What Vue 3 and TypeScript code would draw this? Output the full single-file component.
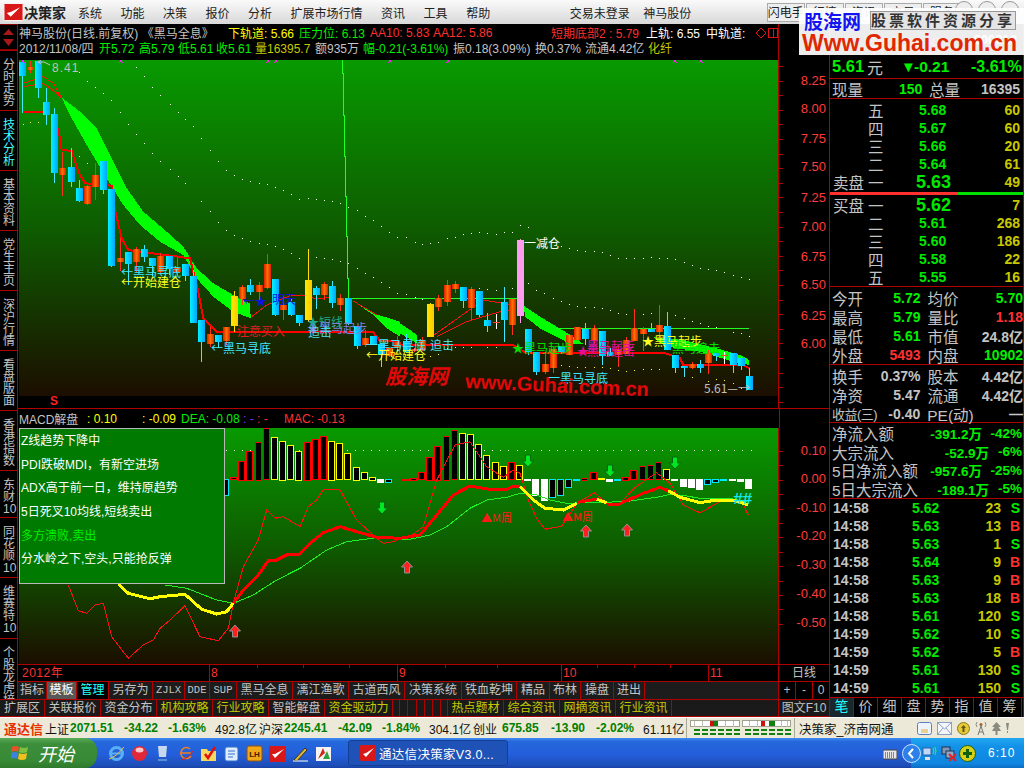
<script setup lang="ts">
// Stock terminal screenshot. Chart data was read off the reference crops, so it is
// kept in crop units (3x, with an offset) and converted to page pixels by z().
type Pt = number[]
interface Seg { t: string; c: string; w: number; b?: boolean }

const z = (ox: number, oy: number, pts: Pt[]) =>
  pts.map(([x, y]) => `${(ox + x / 3).toFixed(1)},${(oy + y / 3).toFixed(1)}`).join(' ')
const dots = (ox: number, oy: number, pts: Pt[]) =>
  pts.map(([x, y]) => ({ x: Math.round(ox + x / 3), y: Math.round(oy + y / 3) }))

const menus = ['系统', '功能', '决策', '报价', '分析', '扩展市场行情', '资讯', '工具', '帮助']
const sideTabs = [
  { t: '分时走势', h: 60 }, { t: '技术分析', h: 60, on: true }, { t: '基本资料', h: 60 }, { t: '党生主页', h: 60 },
  { t: '深沪行情', h: 60 }, { t: '看盘版面', h: 60 }, { t: '香港指数', h: 60 }, { t: '东财10', h: 47 },
  { t: '同花顺10', h: 60 }, { t: '维赛特10', h: 61 }, { t: '个股龙虎榜', h: 61 },
]

const headA: Seg[] = [
  { t: '神马股份(日线.前复权) 《黑马全息》', c: 'grey', w: 209 }, { t: '下轨道: 5.66', c: 'yellow', w: 71 },
  { t: '压力位: 6.13', c: 'green', w: 71 }, { t: 'AA10: 5.83', c: 'red', w: 63 }, { t: 'AA12: 5.86', c: 'red', w: 118 },
  { t: '短期底部2 : 5.79', c: 'red', w: 95 }, { t: '上轨: 6.55', c: 'white', w: 60 }, { t: '中轨道:', c: 'white', w: 50 },
]
const headB: Seg[] = [
  { t: '2012/11/08/四', c: 'grey', w: 80 }, { t: '开5.72', c: 'green', w: 40 }, { t: '高5.79', c: 'green', w: 39 },
  { t: '低5.61', c: 'green', w: 38 }, { t: '收5.61', c: 'green', w: 39 }, { t: '量16395.7', c: 'olive', w: 60 },
  { t: '额935万', c: 'grey', w: 48 }, { t: '幅-0.21(-3.61%)', c: 'green', w: 90 }, { t: '振0.18(3.09%)', c: 'grey', w: 82 },
  { t: '换0.37%', c: 'grey', w: 50 }, { t: '流通4.42亿', c: 'grey', w: 63 }, { t: '化纤', c: 'olive', w: 30 },
]
const macdInfo: Seg[] = [
  { t: 'MACD解盘', c: 'grey', w: 68 }, { t: ': 0.10', c: 'yellow', w: 55 }, { t: ': -0.09', c: 'yellow', w: 39 },
  { t: 'DEA: -0.08', c: 'green', w: 62 }, { t: ': -', c: 'purple', w: 14 }, { t: ': -', c: 'red', w: 27 }, { t: 'MAC: -0.13', c: 'red', w: 70 },
]

// [x, wickTop, bodyTop, bodyBottom, wickBottom, kind]
type Raw = [number, number, number, number, number, string]
const rawA: Raw[] = [
  [68, 20, 20, 62, 172, 'c'], [91, 18, 35, 45, 55, 'r'], [115, 18, 18, 100, 130, 'c'], [139, 100, 142, 180, 212, 'c'],
  [163, 158, 178, 356, 382, 'c'], [187, 290, 340, 362, 422, 'r'], [214, 278, 336, 380, 395, 'c'], [238, 375, 400, 440, 442, 'c'],
  [262, 390, 393, 448, 450, 'r'], [286, 325, 360, 395, 437, 'r'], [310, 318, 318, 404, 418, 'c'], [334, 402, 402, 632, 637, 'c'],
  [361, 550, 610, 622, 650, 'r'], [385, 590, 591, 628, 690, 'c'], [409, 575, 582, 620, 650, 'r'], [433, 570, 582, 605, 620, 'c'],
  [457, 610, 610, 635, 665, 'c'], [481, 595, 603, 652, 655, 'r'], [509, 604, 604, 644, 660, 'c'], [533, 605, 640, 652, 660, 'r'],
  [556, 628, 628, 665, 680, 'c'], [580, 645, 664, 804, 804, 'c'], [604, 795, 795, 860, 920, 'c'], [631, 815, 838, 868, 875, 'r'],
  [655, 840, 840, 860, 880, 'c'], [679, 815, 816, 858, 870, 'r'], [703, 708, 724, 815, 830, 'y'], [727, 690, 696, 732, 750, 'r'],
  [751, 672, 690, 712, 720, 'c'], [778, 680, 690, 712, 735, 'r'], [802, 598, 628, 700, 702, 'r'], [826, 672, 672, 780, 782, 'c'],
  [850, 720, 750, 764, 795, 'r'], [874, 730, 740, 780, 785, 'c'], [898, 780, 780, 803, 812, 'c'], [925, 582, 675, 795, 800, 'y'],
  [949, 692, 698, 720, 762, 'c'], [973, 682, 688, 720, 735, 'r'], [997, 678, 693, 743, 758, 'c'], [1021, 718, 730, 752, 770, 'r'],
  [1045, 730, 730, 808, 812, 'c'], [1072, 812, 812, 872, 880, 'c'], [1096, 825, 850, 872, 875, 'r'], [1120, 843, 843, 868, 870, 'c'],
  [1144, 865, 868, 902, 937, 'c'], [1168, 875, 878, 902, 905, 'r'], [1192, 842, 860, 878, 900, 'r'],
]
const rawB: Raw[] = [
  [18, 342, 362, 396, 400, 'c'], [43, 385, 388, 395, 397, 'r'], [67, 352, 360, 390, 395, 'r'], [91, 248, 252, 350, 350, 'y'],
  [115, 225, 235, 263, 272, 'r'], [142, 180, 195, 245, 258, 'r'], [166, 182, 192, 207, 218, 'r'], [190, 200, 202, 245, 264, 'c'],
  [214, 200, 207, 264, 300, 'r'], [238, 213, 213, 285, 290, 'c'], [262, 280, 300, 318, 338, 'c'], [289, 282, 306, 309, 328, 'w'],
  [313, 202, 246, 299, 368, 'c'], [337, 237, 238, 315, 345, 'r'], [361, 57, 60, 288, 308, 'p'], [385, 327, 327, 395, 405, 'c'],
  [409, 395, 395, 456, 465, 'c'], [436, 395, 432, 456, 462, 'r'], [460, 380, 388, 444, 458, 'r'], [484, 378, 378, 396, 400, 'c'],
  [508, 345, 345, 405, 405, 'r'], [532, 320, 322, 360, 362, 'r'], [556, 310, 328, 358, 375, 'c'], [583, 315, 324, 362, 372, 'r'],
  [607, 333, 333, 408, 435, 'c'], [631, 385, 396, 408, 410, 'c'], [655, 380, 387, 405, 440, 'r'], [679, 352, 360, 402, 402, 'r'],
  [703, 267, 324, 362, 362, 'r'], [730, 322, 328, 342, 395, 'r'], [754, 310, 327, 335, 337, 'c'], [778, 255, 316, 336, 365, 'r'],
  [802, 277, 318, 390, 390, 'c'], [826, 405, 405, 444, 458, 'c'], [853, 437, 437, 444, 470, 'c'], [877, 427, 431, 444, 447, 'r'],
  [901, 420, 432, 444, 458, 'c'], [925, 390, 400, 430, 462, 'r'], [949, 398, 400, 408, 422, 'c'], [973, 395, 404, 407, 430, 'w'],
  [1000, 398, 400, 437, 458, 'c'], [1024, 412, 414, 437, 450, 'c'], [1048, 445, 468, 510, 510, 'c'],
]
const wickCol: Record<string, string> = { c: '#40e8ff', r: '#ff3020', y: '#ffe000', p: '#ff99ee', w: '#ffffff' }
const bodyFill: Record<string, string> = { c: 'url(#gc)', r: 'url(#gr)', y: 'url(#gy)', p: '#ff9cf0', w: '#ff4020' }
const toCandles = (ox: number, oy: number, raw: Raw[]) =>
  raw.map(([x, wt, bt, bb, wb, k]) => {
    const cx = Math.floor(ox + x / 3)
    const top = Math.round(oy + bt / 3)
    return {
      x: cx, wt: Math.round(oy + wt / 3), wh: Math.round((wb - wt) / 3), top,
      h: Math.max(1, Math.round((bb - bt) / 3)), wick: wickCol[k], fill: bodyFill[k],
    }
  })
const candles = [...toCandles(0, 55, rawA), ...toCandles(400, 220, rawB)]

const bands = [
  z(0, 55, [[185, 128], [240, 170], [290, 220], [330, 300], [380, 400], [430, 470], [500, 530], [550, 575], [590, 640], [640, 685], [700, 720], [750, 745], [752, 790], [700, 770], [640, 725], [590, 670], [550, 600], [480, 560], [420, 510], [370, 450], [320, 370], [260, 270], [210, 180]]),
  z(0, 55, [[1060, 738], [1080, 750], [1120, 775], [1200, 800], [1200, 845], [1160, 820], [1120, 780]]),
  z(400, 220, [[0, 310], [30, 330], [50, 345], [50, 370], [0, 340]]),
  z(400, 220, [[372, 258], [420, 290], [470, 320], [520, 350], [550, 372], [510, 372], [470, 350], [420, 325], [375, 290]]),
  z(400, 220, [[760, 352], [850, 360], [950, 385], [1020, 405], [1048, 420], [1048, 435], [1000, 425], [900, 395], [830, 385], [790, 375]]),
]
const redThick = [
  z(0, 55, [[70, 172], [130, 170]]),
  z(0, 55, [[175, 220], [185, 285], [215, 288], [235, 350], [255, 385], [335, 392], [345, 465], [365, 550], [385, 585], [570, 610], [595, 710], [610, 790], [650, 830], [1080, 830], [1120, 832], [1140, 858], [1200, 860]]),
  z(400, 220, [[0, 375], [340, 375], [380, 400], [620, 398], [790, 398], [840, 415], [850, 435], [1030, 435], [1048, 445]]),
]
const redThin = [
  z(0, 55, [[70, 85], [130, 65], [160, 85], [185, 130]]),
  z(0, 55, [[70, 95], [130, 85], [165, 110], [185, 130]]),
  z(400, 220, [[95, 350], [180, 290], [250, 240], [340, 255]]),
  z(400, 220, [[110, 350], [200, 305], [300, 275], [340, 270]]),
  z(0, 55, [[755, 785], [800, 750], [870, 722], [905, 720], [950, 732], [1000, 725]]),
  z(0, 55, [[1060, 738], [1130, 780]]),
]
const stepLine = z(0, 55, [[1027, 15], [1027, 55], [1030, 55], [1030, 180], [1033, 180], [1033, 303], [1037, 303], [1037, 425], [1040, 425], [1040, 545], [1043, 545], [1043, 670], [1046, 670], [1046, 730]])

const whiteDots = [
  ...dots(0, 55, [[409, 37], [433, 63], [457, 97], [481, 120], [509, 147], [533, 170], [556, 192], [580, 213], [604, 249], [631, 286], [655, 318], [679, 345], [703, 360], [727, 372], [751, 378], [778, 385], [802, 388], [826, 395], [850, 405], [874, 418], [898, 432], [925, 428], [949, 432], [973, 435], [997, 438], [1021, 445], [1045, 455], [1072, 465], [1096, 483], [1120, 495], [1144, 513], [1168, 530], [1192, 545]]),
  ...dots(0, 55, [[238, 50], [262, 78], [286, 97], [310, 115], [334, 135], [361, 172], [385, 207], [409, 237], [433, 265], [457, 295], [481, 318], [509, 343], [533, 363], [556, 385], [604, 437], [631, 468], [655, 502], [679, 525], [703, 540], [727, 550], [751, 558], [778, 565], [802, 568], [826, 572], [850, 583], [874, 595], [898, 608], [925, 605], [949, 607], [973, 610], [997, 612], [1021, 618], [1045, 625], [1072, 640], [1096, 655], [1120, 667], [1144, 682], [1168, 697], [1192, 715]]),
  ...dots(400, 220, [[18, 52], [45, 65], [67, 72], [91, 70], [115, 67], [142, 55], [166, 50], [190, 42], [214, 38], [238, 35], [262, 38], [289, 43], [313, 37], [337, 36], [361, 15], [385, 22], [484, 78], [508, 85], [532, 90], [556, 92], [583, 92], [607, 97], [631, 105], [655, 115], [679, 115], [703, 115], [730, 115], [754, 110], [778, 115], [802, 115], [826, 118], [853, 125], [877, 135], [901, 143], [925, 148], [949, 150], [973, 155], [1000, 165], [1024, 172], [1048, 178]]),
  ...dots(400, 220, [[18, 222], [45, 232], [67, 238], [115, 235], [142, 222], [166, 215], [190, 210], [214, 206], [238, 205], [262, 208], [289, 210], [313, 206], [337, 205], [361, 185], [385, 190], [409, 210], [433, 220], [460, 235], [484, 243], [508, 252], [532, 258], [556, 262], [583, 262], [607, 265], [631, 270], [655, 278], [679, 282], [703, 280], [730, 283], [754, 280], [778, 285], [802, 285], [826, 285], [853, 295], [877, 303], [901, 310], [925, 318], [949, 322], [973, 325], [1000, 335], [1024, 338], [1048, 348]]),
]
const yellowDots = [
  ...dots(0, 55, [[68, 207], [91, 202], [115, 202], [238, 303], [262, 325]]),
  ...dots(400, 220, [[91, 408], [115, 402], [142, 385], [166, 380], [190, 382], [214, 382], [262, 380], [289, 382], [484, 435], [508, 438], [532, 440], [556, 440], [583, 440], [607, 442], [631, 445], [655, 450], [679, 452], [703, 450], [730, 447], [754, 447], [778, 447], [853, 460], [877, 470], [925, 482], [949, 478], [973, 480], [1000, 490], [1024, 505]]),
]
const crosses = [23, 121, 268, 276, 390, 448, 675, 701]

const priceAxis = [
  { t: '8.25', y: 85 }, { t: '8.00', y: 113 }, { t: '7.75', y: 143 }, { t: '7.50', y: 171 }, { t: '7.25', y: 202 },
  { t: '7.00', y: 231 }, { t: '6.75', y: 261 }, { t: '6.50', y: 289 }, { t: '6.25', y: 320 }, { t: '6.00', y: 348 },
]
const macdAxis = [
  { t: '0.10', y: 455 }, { t: '0.00', y: 483 }, { t: '-0.10', y: 512 }, { t: '-0.20', y: 540 },
  { t: '-0.30', y: 569 }, { t: '-0.40', y: 598 }, { t: '-0.50', y: 627 },
]
const priceTicks = Array.from({ length: 24 }, (_, i) => 66 + i * 14.6)
const macdTicks = Array.from({ length: 13 }, (_, i) => 451 + i * 14.4)

const labels = [
  { x: 121, y: 277, t: '←黑马寻底', c: '#40e8ff' }, { x: 121, y: 287, t: '←开始建仓', c: '#ffff20' },
  { x: 237, y: 336, t: '注意买入', c: '#e02020' }, { x: 211, y: 353, t: '←黑马寻底', c: '#40e8ff' },
  { x: 243, y: 306, t: '←★', c: '#1010e0' }, { x: 272, y: 304, t: '明天', c: '#1010e0' },
  { x: 307, y: 327, t: '★短线', c: '#20a890' }, { x: 307, y: 333, t: '★黑马起步', c: '#8080e0' }, { x: 308, y: 337, t: '追击', c: '#50d8e8' },
  { x: 366, y: 350, t: '一黑马寻底', c: '#40e8ff' }, { x: 366, y: 360, t: '←开始建仓', c: '#ffff20' },
  { x: 524, y: 248, t: '一减仓', c: '#ffffff' }, { x: 430, y: 350, t: '追击', c: '#50d8e8' },
  { x: 512, y: 353, t: '★黑马起步', c: '#00e000' }, { x: 577, y: 356, t: '★', c: '#e0109a' },
  { x: 587, y: 351, t: '黑马起步', c: '#e0109a' }, { x: 587, y: 356, t: '黑马追击', c: '#e0109a' },
  { x: 642, y: 346, t: '★黑马起步', c: '#ffff20' }, { x: 672, y: 353, t: '黑马追击', c: '#00e000' },
  { x: 548, y: 383, t: '一黑马寻底', c: '#40e8ff' }, { x: 704, y: 393, t: '5.61—→', c: '#c0c0c0' },
]

// [x, end of the bar in crop units, kind]; the zero line is 238
const barsA: [number, number, string][] = [
  [680, 285, 'c'], [703, 232, 'r'], [727, 182, 'r'], [751, 152, 'r'], [778, 125, 'r'], [802, 85, 'r'], [826, 112, 'y'], [850, 122, 'y'],
  [874, 136, 'y'], [898, 152, 'y'], [925, 125, 'r'], [949, 118, 'r'], [973, 108, 'r'], [997, 122, 'y'], [1021, 130, 'y'], [1045, 160, 'y'],
  [1072, 200, 'y'], [1096, 217, 'y'], [1120, 230, 'y'], [1144, 246, 'w'], [1168, 246, 'c'],
]
const barsB: [number, number, string][] = [
  [18, 236, 'r'], [43, 233, 'r'], [67, 217, 'r'], [91, 170, 'r'], [115, 137, 'r'], [142, 107, 'r'], [166, 90, 'r'], [190, 100, 'y'], [214, 103, 'y'],
  [238, 133, 'y'], [262, 166, 'y'], [289, 187, 'y'], [313, 199, 'y'], [337, 187, 'r'], [361, 196, 'y'], [385, 240, 'w'], [409, 285, 'w'], [436, 302, 'w'],
  [460, 292, 'c'], [484, 286, 'c'], [508, 262, 'c'], [532, 240, 'c'], [556, 233, 'r'], [583, 217, 'r'], [607, 235, 'y'], [631, 245, 'w'], [655, 242, 'c'],
  [679, 230, 'r'], [703, 211, 'r'], [730, 199, 'r'], [754, 196, 'r'], [778, 187, 'r'], [802, 208, 'y'], [826, 240, 'w'], [853, 258, 'w'], [877, 263, 'w'],
  [901, 269, 'w'], [925, 254, 'c'], [949, 247, 'c'], [973, 240, 'c'], [1000, 242, 'w'], [1024, 245, 'w'], [1048, 266, 'w'],
]
const barCol: Record<string, string> = { r: '#ff0000', y: '#ffff00', c: '#00e8ff', w: '#ffffff' }
const toBars = (ox: number, raw: [number, number, string][]) =>
  raw.map(([x, end, k]) => {
    const a = 400 + Math.min(end, 238) / 3
    const b = 400 + Math.max(end, 238) / 3
    return { x: Math.floor(ox + x / 3) - 3.5, y: Math.round(a) + 0.5, h: Math.max(1, Math.round(b - a)), stroke: barCol[k], fill: k === 'w' ? '#ffffff' : '#000000' }
  })
const bars = [...toBars(0, barsA), ...toBars(400, barsB)]
const zeroDots = Array.from({ length: 66 }, (_, i) => 226 + i * 8.07)

const macdThin = z(0, 400, [[205, 555], [235, 632], [260, 640], [285, 615], [310, 610], [335, 710], [385, 775], [430, 735], [460, 720], [480, 685], [510, 660], [555, 617], [600, 710], [655, 722], [685, 685], [700, 610], [730, 500], [775, 420], [800, 330], [825, 355], [850, 350], [900, 380], [925, 320], [950, 300], [970, 268], [1020, 270], [1070, 360], [1130, 415], [1150, 430], [1180, 425], [1200, 415]])
  + ' ' + z(400, 400, [[0, 415], [30, 410], [70, 380], [110, 240], [165, 135], [210, 125], [260, 200], [310, 232], [340, 210], [360, 220], [385, 300], [410, 355], [435, 388], [485, 378], [530, 310], [583, 278], [620, 310], [660, 310], [705, 262], [770, 218], [810, 250], [850, 315], [900, 338], [970, 300], [1025, 305], [1045, 345]])
const macdDea = z(0, 400, [[495, 555], [560, 565], [650, 600], [700, 610], [760, 585], [830, 540], [900, 505], [980, 450], [1040, 425], [1130, 413], [1200, 418]])
  + ' ' + z(400, 400, [[0, 418], [30, 418], [90, 405], [140, 380], [210, 325], [260, 300], [320, 292], [360, 280], [410, 285], [450, 300], [500, 310], [560, 308], [620, 307], [690, 303], [780, 290], [810, 283], [860, 288], [900, 295], [1000, 297], [1040, 305]])
const macdYellow = [
  z(0, 400, [[355, 552], [385, 580], [450, 596], [480, 590], [555, 583], [605, 628], [650, 642], [680, 635], [700, 610]]),
  z(400, 400, [[360, 260], [400, 300], [435, 325], [490, 330], [530, 310]]),
  z(400, 400, [[590, 298], [620, 308]]),
  z(400, 400, [[805, 272], [840, 292], [900, 308], [950, 300], [1000, 300], [1045, 315]]),
]
const macdRed = [
  z(0, 400, [[700, 610], [730, 570], [775, 525], [805, 482], [830, 480], [860, 465], [900, 462], [930, 430], [970, 398], [1020, 380], [1070, 395], [1130, 412], [1200, 415]])
    + ' ' + z(400, 400, [[0, 415], [60, 405], [110, 345], [160, 285], [210, 258], [280, 270], [320, 268], [340, 258], [360, 258]]),
  z(400, 400, [[530, 307], [590, 298]]),
  z(400, 400, [[620, 312], [660, 312], [680, 302], [730, 280], [780, 262], [805, 272]]),
]
const upArrows = [[235, 631], [407, 567], [586, 531], [627, 530]]
const downArrows = [[382, 508], [528, 461], [610, 471], [675, 463]]

const advice = [
  { t: 'Z线趋势下降中' }, { t: 'PDI跌破MDI，有新空进场' }, { t: 'ADX高于前一日，维持原趋势' },
  { t: '5日死叉10均线,短线卖出' }, { t: '多方溃败,卖出', sell: true }, { t: '分水岭之下,空头,只能抢反弹' },
]

const dateMajor = [{ x: 209, t: '8' }, { x: 397, t: '9' }, { x: 561, t: '10' }, { x: 708, t: '11' }]
const dateMinor = [257, 303, 349, 445, 497, 597, 634, 670]

const toolA = [
  { t: '指标', w: 29 }, { t: '模板', w: 30, k: 'sel' }, { t: '管理', w: 32, k: 'cyan' }, { t: '另存为', w: 44 }, { t: 'ZJLX', w: 32, k: 'mono' },
  { t: 'DDE', w: 25, k: 'mono' }, { t: 'SUP', w: 27, k: 'mono' }, { t: '黑马全息', w: 56 }, { t: '漓江渔歌', w: 56 }, { t: '古道西风', w: 56 },
  { t: '决策系统', w: 57 }, { t: '铁血乾坤', w: 55 }, { t: '精品', w: 33 }, { t: '布林', w: 31 }, { t: '操盘', w: 33 }, { t: '进出', w: 31 },
]
const toolB = [
  { t: '扩展区', w: 45 }, { t: '关联报价', w: 56 }, { t: '资金分布', w: 56 }, { t: '机构攻略', w: 56, k: 'olive' }, { t: '行业攻略', w: 56, k: 'olive' },
  { t: '智能解盘', w: 56 }, { t: '资金驱动力', w: 68, k: 'olive' },
  { t: '', w: 7 }, { t: '', w: 8 }, { t: '', w: 9 }, { t: '', w: 8 }, { t: '', w: 8 }, { t: '', w: 8 }, { t: '', w: 7 },
  { t: '热点题材', w: 56, k: 'olive' }, { t: '综合资讯', w: 56, k: 'olive' }, { t: '网摘资讯', w: 56, k: 'olive' }, { t: '行业资讯', w: 56, k: 'olive' },
]

const sell = [
  { n: '五', p: '5.68', v: 60 }, { n: '四', p: '5.67', v: 60 }, { n: '三', p: '5.66', v: 20 }, { n: '二', p: '5.64', v: 61 },
  { n: '一', p: '5.63', v: 49, big: true, side: '卖盘' },
]
const buy = [
  { n: '一', p: '5.62', v: 7, big: true, side: '买盘' }, { n: '二', p: '5.61', v: 268 }, { n: '三', p: '5.60', v: 186 },
  { n: '四', p: '5.58', v: 22 }, { n: '五', p: '5.55', v: 16 },
]
const stats = [
  { a: '今开', b: '5.72', bc: 'green', c: '均价', d: '5.70', dc: 'green' }, { a: '最高', b: '5.79', bc: 'green', c: '量比', d: '1.18', dc: 'red' },
  { a: '最低', b: '5.61', bc: 'green', c: '市值', d: '24.8亿', dc: 'grey' }, { a: '外盘', b: '5493', bc: 'red', c: '内盘', d: '10902', dc: 'green' },
]
const stats2 = [
  { a: '换手', b: '0.37%', bc: 'grey', c: '股本', d: '4.42亿', dc: 'grey' }, { a: '净资', b: '5.47', bc: 'grey', c: '流通', d: '4.42亿', dc: 'grey' },
  { a: '收益(三)', b: '-0.40', bc: 'grey', c: 'PE(动)', d: '—', dc: 'grey', tight: true },
]
const flows = [
  { a: '净流入额', v: '-391.2万', p: '-42%', far: true }, { a: '大宗流入', v: '-52.9万', p: '-6%' },
  { a: '5日净流入额', v: '-957.6万', p: '-25%', far: true }, { a: '5日大宗流入', v: '-189.1万', p: '-5%' },
]
const ticks = [
  ['14:58', '5.62', 23, 'S'], ['14:58', '5.63', 13, 'B'], ['14:58', '5.63', 1, 'S'], ['14:58', '5.64', 9, 'B'],
  ['14:58', '5.63', 9, 'B'], ['14:58', '5.63', 18, 'B'], ['14:58', '5.61', 120, 'S'], ['14:59', '5.62', 10, 'S'],
  ['14:59', '5.62', 5, 'B'], ['14:59', '5.61', 130, 'S'], ['14:59', '5.61', 150, 'S'],
]
const panelTabs = ['笔', '价', '细', '盘', '势', '指', '值', '筹']

const statusSegs: Seg[] = [
  { t: '通达信', c: 'st-brand', w: 41, b: true }, { t: '上证', c: 'st-ink', w: 25 }, { t: '2071.51', c: 'st-green', w: 54, b: true },
  { t: '-34.22', c: 'st-green', w: 44, b: true }, { t: '-1.63%', c: 'st-green', w: 47, b: true }, { t: '492.8亿', c: 'st-ink', w: 44 },
  { t: '沪深', c: 'st-ink', w: 25 }, { t: '2245.41', c: 'st-green', w: 54, b: true }, { t: '-42.09', c: 'st-green', w: 44, b: true },
  { t: '-1.84%', c: 'st-green', w: 47, b: true }, { t: '304.1亿', c: 'st-ink', w: 44 }, { t: '创业', c: 'st-ink', w: 29 },
  { t: '675.85', c: 'st-green', w: 49, b: true }, { t: '-13.90', c: 'st-green', w: 45, b: true }, { t: '-2.02%', c: 'st-green', w: 47, b: true },
  { t: '61.11亿', c: 'st-ink', w: 42 },
]
</script>

<template>
  <div class="app">
    <!-- top menu -->
    <div class="menubar">
      <div class="logo">
        <svg class="logo-mark" width="21" height="20" viewBox="0 0 22 20">
          <rect x="1" y="1" width="20" height="18" rx="1" fill="#d81818" stroke="#fff" />
          <path d="M4 11 L8 15 L18 5 L8 10 Z" fill="#fff" />
        </svg>
        <span class="logo-text">决策家</span>
      </div>
      <span v-for="m in menus" :key="m" class="menu-item">{{ m }}</span>
      <span class="menu-trade">交易未登录</span>
      <span class="menu-stock">神马股份</span>
      <div class="menu-btns">
        <span class="menu-btn">闪电手</span>
        <span class="menu-btn">行情</span>
        <span class="menu-btn">资讯</span>
        <span class="menu-btn">交易</span>
        <span class="menu-btn">服务</span>
      </div>
    </div>

    <div class="workspace">
      <div class="left-col">
        <div class="upper">
          <div class="side">
            <div class="side-arrows">
              <svg width="17" height="25" viewBox="0 0 17 25">
                <path d="M3 10 L8.5 4 L14 10 Z" fill="#a81818" />
                <path d="M3 14 L14 14 L8.5 21 Z" fill="#a81818" />
              </svg>
            </div>
            <div
              v-for="s in sideTabs" :key="s.t" class="side-tab"
              :class="{ 'side-on': s.on }" :style="{ height: s.h + 'px' }"
            >
              <span class="side-text">{{ s.t }}</span>
            </div>
          </div>

          <div class="center">
            <div class="head">
              <div class="head-row">
                <span v-for="s in headA" :key="s.t" :class="s.c" :style="{ width: s.w + 'px' }">{{ s.t }}</span>
                <span class="head-icons">
                  <svg width="22" height="12" viewBox="0 0 22 12">
                    <path d="M5 1 L10 6 L5 11 L0 6 Z" fill="none" stroke="#e01010" />
                    <rect x="12.5" y="1.5" width="9" height="9" fill="none" stroke="#e01010" />
                    <path d="M17.5 1 V11" stroke="#e01010" />
                  </svg>
                </span>
              </div>
              <div class="head-row">
                <span v-for="s in headB" :key="s.t" :class="s.c" :style="{ width: s.w + 'px' }">{{ s.t }}</span>
              </div>
            </div>

            <svg class="chart-main" width="811" height="349" viewBox="18 60 811 349">
              <defs>
                <linearGradient id="bg" x1="0" y1="0" x2="0" y2="1">
                  <stop offset="0" stop-color="#089a00" />
                  <stop offset="0.5" stop-color="#0e5c00" />
                  <stop offset="1" stop-color="#1c0e00" />
                </linearGradient>
                <linearGradient id="gc" x1="0" y1="0" x2="1" y2="0">
                  <stop offset="0" stop-color="#00f4ff" />
                  <stop offset="1" stop-color="#00a4ff" />
                </linearGradient>
                <linearGradient id="gr" x1="0" y1="0" x2="1" y2="0">
                  <stop offset="0" stop-color="#e02000" />
                  <stop offset="0.5" stop-color="#ff7000" />
                  <stop offset="1" stop-color="#e02000" />
                </linearGradient>
                <linearGradient id="gy" x1="0" y1="0" x2="1" y2="0">
                  <stop offset="0" stop-color="#ffe800" />
                  <stop offset="1" stop-color="#ffc800" />
                </linearGradient>
              </defs>
              <rect x="19" y="60" width="759" height="336" fill="url(#bg)" />
              <polygon v-for="(b, i) in bands" :key="i" :points="b" fill="#00ff00" shape-rendering="crispEdges" />
              <rect v-for="(d, i) in whiteDots" :key="'w' + i" :x="d.x" :y="d.y" width="1" height="1" fill="#ffffff" />
              <rect v-for="(d, i) in yellowDots" :key="'y' + i" :x="d.x" :y="d.y" width="1" height="1" fill="#ffff40" />
              <polyline :points="stepLine" fill="none" stroke="#20ff20" shape-rendering="crispEdges" />
              <path d="M349 298.5 H523 M556 328.5 H749" stroke="#20ff20" shape-rendering="crispEdges" />
              <polyline v-for="(l, i) in redThin" :key="'t' + i" :points="l" fill="none" stroke="#ff1010" shape-rendering="crispEdges" />
              <polyline v-for="(l, i) in redThick" :key="'r' + i" :points="l" fill="none" stroke="#ff0000" stroke-width="2" shape-rendering="crispEdges" />
              <g v-for="(c, i) in candles" :key="'c' + i" shape-rendering="crispEdges">
                <rect :x="c.x" :y="c.wt" width="1" :height="c.wh" :fill="c.wick" />
                <rect :x="c.x - 3" :y="c.top" width="7" :height="c.h" :fill="c.fill" />
              </g>
              <g v-for="x in crosses" :key="x" stroke="#ff20ff" shape-rendering="crispEdges">
                <path :d="`M${x - 2} 59 L${x + 2} 63 M${x + 2} 59 L${x - 2} 63`" />
              </g>
              <path d="M41 60 L38 62 L41 64 M38 62 H44 L50 65" fill="none" stroke="#c0c0c0" />
              <text x="52" y="72" fill="#c0c0c0" class="chart-num">8.41</text>
              <text
                v-for="(l, i) in labels" :key="'l' + i" :x="l.x" :y="l.y" :fill="l.c" class="chart-label"
              >{{ l.t }}</text>
              <text x="385" y="384" class="wm-cn">股海网</text>
              <text x="465" y="388" class="wm-en" transform="rotate(2.6 465 388)">www.Guhai.com.cn</text>
              <rect x="19" y="396" width="759" height="12" fill="#000" />
              <text x="50" y="405" class="mark-s">S</text>
              <rect x="778" y="60" width="1" height="349" fill="#b00000" />
              <rect x="18" y="408" width="811" height="1" fill="#b00000" />
              <g v-for="t in priceTicks" :key="t">
                <rect x="779" :y="Math.round(t)" width="4" height="1" fill="#b00000" />
              </g>
              <text v-for="a in priceAxis" :key="a.t" x="826" :y="a.y" class="axis-text">{{ a.t }}</text>
            </svg>

            <div class="info">
              <span v-for="s in macdInfo" :key="s.t + s.w" :class="s.c" :style="{ width: s.w + 'px' }">{{ s.t }}</span>
            </div>

            <div class="macd-wrap">
              <svg class="chart-macd" width="811" height="237" viewBox="18 428 811 237">
                <defs>
                  <linearGradient id="bg2" x1="0" y1="0" x2="0" y2="1">
                    <stop offset="0" stop-color="#089a00" />
                    <stop offset="0.5" stop-color="#0e5c00" />
                    <stop offset="1" stop-color="#1c0e00" />
                  </linearGradient>
                </defs>
                <rect x="19" y="428" width="759" height="236" fill="url(#bg2)" />
                <rect v-for="x in zeroDots" :key="x" :x="Math.round(x)" y="450" width="1" height="1" fill="#ffffff" />
                <rect
                  v-for="(b, i) in bars" :key="'b' + i" :x="b.x" :y="b.y" width="6" :height="b.h"
                  :fill="b.fill" :stroke="b.stroke" shape-rendering="crispEdges"
                />
                <polyline :points="macdThin" fill="none" stroke="#ff1010" shape-rendering="crispEdges" />
                <polyline :points="macdDea" fill="none" stroke="#20f020" shape-rendering="crispEdges" />
                <polyline v-for="(l, i) in macdRed" :key="'mr' + i" :points="l" fill="none" stroke="#ff0000" stroke-width="3" shape-rendering="crispEdges" />
                <polyline v-for="(l, i) in macdYellow" :key="'my' + i" :points="l" fill="none" stroke="#ffff00" stroke-width="3" shape-rendering="crispEdges" />
                <path
                  v-for="a in upArrows" :key="'u' + a[0]" :transform="`translate(${a[0]} ${a[1]})`"
                  d="M0 -6 L5.5 0 L2.5 0 L2.5 6 L-2.5 6 L-2.5 0 L-5.5 0 Z" fill="#ff2020" stroke="#909090"
                />
                <path
                  v-for="a in downArrows" :key="'d' + a[0]" :transform="`translate(${a[0]} ${a[1]})`"
                  d="M0 6 L5.5 0 L2.5 0 L2.5 -6 L-2.5 -6 L-2.5 0 L-5.5 0 Z" fill="#00e820" stroke="#006a10"
                />
                <text x="481" y="522" class="m-week">▲M周</text>
                <text x="562" y="521" class="m-week">▲M周</text>
                <text x="733" y="504" class="m-hash">##</text>
                <rect x="778" y="428" width="1" height="237" fill="#b00000" />
                <rect x="18" y="664" width="811" height="1" fill="#b00000" />
                <rect v-for="t in macdTicks" :key="t" x="779" :y="Math.round(t)" width="4" height="1" fill="#b00000" />
                <text v-for="a in macdAxis" :key="a.t" x="826" :y="a.y" class="axis-text">{{ a.t }}</text>
              </svg>
              <div class="advice">
                <div v-for="a in advice" :key="a.t" class="advice-row" :class="{ 'advice-sell': a.sell }">{{ a.t }}</div>
              </div>
            </div>

            <div class="dates">
              <div class="date-line">
                <span class="date-year">2012年</span>
                <span v-for="d in dateMajor" :key="d.t" class="date-major" :style="{ left: d.x - 18 + 'px' }">{{ d.t }}</span>
                <span v-for="x in dateMinor" :key="x" class="date-minor" :style="{ left: x - 18 + 'px' }"></span>
              </div>
              <div class="date-cell">日线</div>
            </div>

            <div class="toolbar">
              <div class="tools">
                <span
                  v-for="b in toolA" :key="b.t" class="tool" :class="b.k"
                  :style="{ width: b.w + 'px' }"
                >{{ b.t }}</span>
              </div>
              <div class="zoom-btns">
                <span class="zoom-btn">+</span>
                <span class="zoom-btn">-</span>
                <span class="zoom-btn">0</span>
              </div>
            </div>
          </div>
        </div>

        <div class="toolbar toolbar-b">
          <div class="tools">
            <span
              v-for="(b, i) in toolB" :key="i" class="tool" :class="b.k"
              :style="{ width: b.w + 'px' }"
            >{{ b.t }}</span>
          </div>
          <span class="f10">图文F10</span>
        </div>
      </div>

      <!-- quote panel -->
      <div class="panel">
        <div class="p-title"><span class="p-name">神马股份</span><span class="p-code">600810</span></div>
        <div class="p-quote">
          <span class="q-price">5.61</span><span class="q-yuan">元</span>
          <span class="q-arrow">▼</span><span class="q-chg">-0.21</span><span class="q-pct">-3.61%</span>
        </div>
        <div class="p-vol">
          <span class="cn16">现量</span><span class="v-now">150</span>
          <span class="cn16 v-total">总量</span><span class="v-sum">16395</span>
        </div>
        <div class="p-book p-sell">
          <div v-for="r in sell" :key="r.n" class="book-row">
            <span class="book-side">{{ r.side }}</span>
            <span class="book-n">{{ r.n }}</span>
            <span class="book-p" :class="{ 'book-big': r.big }">{{ r.p }}</span>
            <span class="book-v">{{ r.v }}</span>
          </div>
        </div>
        <div class="p-divider"><span class="div-red"></span><span class="div-green"></span></div>
        <div class="p-book p-buy">
          <div v-for="r in buy" :key="r.n" class="book-row">
            <span class="book-side">{{ r.side }}</span>
            <span class="book-n">{{ r.n }}</span>
            <span class="book-p" :class="{ 'book-big': r.big }">{{ r.p }}</span>
            <span class="book-v">{{ r.v }}</span>
          </div>
        </div>
        <div class="p-stats">
          <div v-for="r in stats" :key="r.a" class="stat-row">
            <span class="cn16 stat-a">{{ r.a }}</span><span class="stat-b" :class="r.bc">{{ r.b }}</span>
            <span class="cn16 stat-c">{{ r.c }}</span><span class="stat-d" :class="r.dc">{{ r.d }}</span>
          </div>
        </div>
        <div class="p-stats p-stats2">
          <div v-for="r in stats2" :key="r.a" class="stat-row">
            <span class="cn16 stat-a" :class="{ 'stat-tight': r.tight }">{{ r.a }}</span><span class="stat-b" :class="r.bc">{{ r.b }}</span>
            <span class="cn16 stat-c">{{ r.c }}</span><span class="stat-d" :class="r.dc">{{ r.d }}</span>
          </div>
        </div>
        <div class="p-flow">
          <div v-for="r in flows" :key="r.a" class="flow-row">
            <span class="cn16 flow-a">{{ r.a }}</span>
            <span class="flow-v" :class="{ 'flow-far': r.far }">{{ r.v }}</span>
            <span class="flow-p">{{ r.p }}</span>
          </div>
        </div>
        <div class="p-ticks">
          <div v-for="(r, i) in ticks" :key="i" class="tick-row">
            <span class="tick-time">{{ r[0] }}</span>
            <span class="tick-price">{{ r[1] }}</span>
            <span class="tick-vol">{{ r[2] }}</span>
            <span class="tick-side" :class="r[3] === 'B' ? 'red' : 'green'">{{ r[3] }}</span>
          </div>
        </div>
        <div class="p-tabs">
          <span v-for="(t, i) in panelTabs" :key="t" class="p-tab" :class="{ 'p-tab-on': i === 0 }">{{ t }}</span>
        </div>
      </div>
    </div>

    <!-- status bar -->
    <div class="status">
      <div class="st-quotes">
        <span
          v-for="s in statusSegs" :key="s.t" :class="[s.c, { 'st-bold': s.b }]"
          :style="{ width: s.w + 'px' }"
        >{{ s.t }}</span>
      </div>
      <div class="st-meter">
        <svg width="105" height="17" viewBox="0 0 105 17" shape-rendering="crispEdges">
          <g fill="#fff" stroke="#a0a090">
            <rect x="0.5" y="0.5" width="49" height="6" />
            <rect x="52.5" y="0.5" width="49" height="6" />
          </g>
          <rect x="20" y="1" width="4" height="5" fill="#d01010" />
          <rect x="24" y="1" width="4" height="5" fill="#108010" />
          <rect x="72" y="1" width="4" height="5" fill="#d01010" />
          <rect x="80" y="1" width="6" height="5" fill="#108010" />
          <path d="M5 6.5 V1 M13 6.5 V1 M36 6.5 V1 M44 6.5 V1 M60 6.5 V1 M68 6.5 V1 M92 6.5 V1 M98 6.5 V1" stroke="#c0c0b0" />
          <path d="M4 10.5 H50 M4 14.5 H50 M56 10.5 H102 M56 14.5 H102" stroke="#108010" stroke-width="2" stroke-dasharray="6 2" />
        </svg>
      </div>
      <div class="st-server">决策家_济南网通</div>
      <div class="st-icons">
        <svg width="15" height="13" viewBox="0 0 15 13"><rect x=".5" y=".5" width="14" height="12" rx="2" fill="#eef4ff" stroke="#5b7fc0" /><path d="M4 8 H11 M4 10 H11" stroke="#e0b020" /></svg>
        <svg width="15" height="13" viewBox="0 0 15 13"><rect x=".5" y=".5" width="14" height="12" fill="#f4f6fc" stroke="#8aa0c8" /><path d="M1 1 L7.5 7 L14 1 M1 12 L6 6 M14 12 L9 6" fill="none" stroke="#8aa0c8" /></svg>
        <svg width="13" height="13" viewBox="0 0 13 13"><circle cx="6.5" cy="6.5" r="6" fill="#e8c838" stroke="#8a7a18" /><path d="M6.5 3 L9 6 H7.5 V10 H5.5 V6 H4 Z" fill="#5a5a10" /></svg>
        <svg width="12" height="15" viewBox="0 0 12 15"><path d="M6 5 L3 14 M6 5 L9 14 M4 11 H8" stroke="#777" fill="none" /><circle cx="6" cy="3.5" r="1.5" fill="#a06030" /><path d="M2 1 Q0 3.5 2 6 M10 1 Q12 3.5 10 6" stroke="#888" fill="none" /></svg>
        <svg width="9" height="13" viewBox="0 0 9 13"><path d="M4.5 0 L9 5 H6.5 L9 9 H5.5 V13 H3.5 V9 H0 L2.5 5 H0 Z" fill="#8a8a80" /></svg>
        <svg width="3" height="11" viewBox="0 0 3 11"><path d="M0 0 H3 L2 7 H1 Z M1 8 H2 V10 H1 Z" fill="#8a8a80" /></svg>
      </div>
    </div>

    <!-- windows taskbar -->
    <div class="taskbar">
      <div class="start">
        <svg width="18" height="16" viewBox="0 0 18 16">
          <path d="M1 2 Q4 0 8 2 L7 7 Q4 5 0 7 Z" fill="#e8512a" />
          <path d="M9 2 Q13 4 17 2 L16 7 Q12 9 8 7 Z" fill="#80c040" />
          <path d="M0 8 Q4 6 7 8 L6 14 Q3 12 -1 14 Z" fill="#3c82e0" />
          <path d="M8 8 Q12 10 16 8 L15 14 Q11 16 7 14 Z" fill="#f4c020" />
        </svg>
        <span class="start-text">开始</span>
      </div>
      <div class="quick">
        <svg width="17" height="17" viewBox="0 0 17 17"><circle cx="8.5" cy="8.5" r="6" fill="none" stroke="#58b0f8" stroke-width="3" /><path d="M3 8.5 H14" stroke="#58b0f8" stroke-width="2" /><path d="M1 14 Q8 12 16 2" stroke="#f0c040" fill="none" /></svg>
        <svg width="17" height="17" viewBox="0 0 17 17"><circle cx="8.5" cy="8.5" r="7.5" fill="#e02838" /><ellipse cx="8.5" cy="5" rx="4" ry="2.5" fill="#ffc8c8" /></svg>
        <svg width="17" height="17" viewBox="0 0 17 17"><path d="M4 1 H13 L12 12 H5 Z" fill="#c8d8f0" /><path d="M4 14 H13 V16 H4 Z" fill="#5890d8" /></svg>
        <svg width="17" height="17" viewBox="0 0 17 17"><path d="M13 4 A5.5 5.5 0 1 0 14 11 M3 8 H14" stroke="#f08020" fill="none" stroke-width="1.5" /><path d="M4 15 Q12 13 16 6" stroke="#e02020" fill="none" /></svg>
        <svg width="17" height="17" viewBox="0 0 17 17"><path d="M1 4 H7 L8 6 H16 V16 H1 Z" fill="#f4d860" /><path d="M5 9 L8 13 L15 2" stroke="#e01010" stroke-width="2.5" fill="none" /></svg>
        <svg width="17" height="17" viewBox="0 0 17 17"><rect x="2" y="2" width="13" height="14" rx="2" fill="#e0ecff" stroke="#3070c8" /><path d="M5 6 H12 M5 9 H12 M5 12 H10" stroke="#3070c8" /></svg>
        <svg width="17" height="17" viewBox="0 0 17 17"><rect x="1" y="1" width="15" height="15" rx="2" fill="#f0a818" stroke="#905010" /><text x="8.5" y="12" class="lh-text">LH</text></svg>
        <svg width="17" height="17" viewBox="0 0 17 17"><rect x="0" y="1" width="17" height="16" rx="1" fill="#d81818" /><path d="M3 9 L6 13 L15 4 L6 9 Z" fill="#fff" /></svg>
        <svg width="17" height="17" viewBox="0 0 17 17"><path d="M2 15 L13 3 L15 5 L5 16 Z" fill="#d8b840" stroke="#403010" /><path d="M1 16 H16" stroke="#fff" /></svg>
        <svg width="17" height="17" viewBox="0 0 17 17"><rect x="1" y="2" width="15" height="14" fill="#f4f4f4" /><path d="M3 14 L8 3 L10 8 Z" fill="#d02818" /><path d="M8 14 L12 6 L15 14 Z" fill="#30a040" /></svg>
      </div>
      <div class="task-btn">
        <svg width="16" height="16" viewBox="0 0 16 16"><rect x="0" y="0" width="16" height="16" rx="1" fill="#d81818" /><path d="M3 9 L6 12 L14 3 L6 8 Z" fill="#fff" /></svg>
        <span class="task-text">通达信决策家V3.0...</span>
      </div>
      <div class="tray-wrap">
        <svg width="14" height="13" viewBox="0 0 14 13" class="tray-kb"><rect x="0" y="3" width="14" height="9" fill="#e8e8e8" stroke="#444" /><path d="M2 6 H12 M2 8 H12 M2 10 H12" stroke="#222" stroke-dasharray="1 1" /></svg>
        <svg width="19" height="19" viewBox="0 0 19 19" class="tray-chev"><circle cx="9.5" cy="9.5" r="9" fill="#2c80e8" stroke="#cfe4ff" /><path d="M11 5 L7 9.5 L11 14" stroke="#fff" stroke-width="2" fill="none" /></svg>
        <div class="tray">
          <svg width="17" height="17" viewBox="0 0 17 17"><rect x="1" y="3" width="8" height="7" fill="#c0d8f8" stroke="#3060a0" /><path d="M3 12 H8 V15 H3 Z" fill="#e0e0e0" /><path d="M11 3 Q13 6 11 9 M13 2 Q15 6 13 10" stroke="#40f040" fill="none" /></svg>
          <svg width="16" height="17" viewBox="0 0 16 17"><rect x="1" y="2" width="8" height="7" fill="#8098b8" stroke="#203050" /><rect x="5" y="6" width="8" height="7" fill="#90a8c8" stroke="#203050" /><path d="M8 9 L15 16 M15 9 L8 16" stroke="#e82020" stroke-width="2" /></svg>
          <svg width="17" height="17" viewBox="0 0 17 17"><circle cx="8.5" cy="8.5" r="8" fill="#d8d018" stroke="#206010" /><path d="M8.5 4 V13 M4 8.5 H13" stroke="#106010" stroke-width="3" /></svg>
          <span class="clock">6:10</span>
        </div>
      </div>
    </div>

    <!-- site watermark laid over the top right corner -->
    <div class="top-circles"><i></i><i></i><i></i></div>
    <div class="banner">
      <div class="banner-top">
        <span class="banner-cn">股海网</span>
        <span class="banner-sub">股票软件资源分享</span>
      </div>
      <div class="banner-url">Www.Guhai.com.cn</div>
    </div>
  </div>
</template>

<style scoped>
.app {
  position: relative;
  width: 1024px;
  height: 768px;
  overflow: hidden;
  background: #000;
  display: flex;
  flex-direction: column;
  font-family: "Liberation Sans", "Noto Sans CJK SC", sans-serif;
  font-size: 12px;
  color: #c0c0c0;
}
.grey { color: #c4c4c4; }
.white { color: #ffffff; }
.red { color: #ff3030; }
.green { color: #00f000; }
.yellow { color: #ffff00; }
.olive { color: #c8c800; }
.purple { color: #a020f0; }

.menubar {
  height: 24px;
  flex: none;
  display: flex;
  align-items: center;
  gap: 18.5px;
  background: linear-gradient(#fafafa, #e6e6e6 60%, #d8d8d8);
  color: #222;
  font-size: 12px;
}
.logo {
  width: 59.5px;
  display: flex;
  align-items: center;
  gap: 0;
  padding-left: 3px;
  box-sizing: border-box;
  flex: none;
  overflow: visible;
}
.logo-mark { flex: none; }
.logo-text {
  font-weight: 700;
  font-size: 14px;
  white-space: nowrap;
  color: #222;
  flex: none;
}
.menu-item { white-space: nowrap; }
.menu-trade { margin-left: 61px; }
.menu-stock { margin-left: -5px; }
.menu-btns { display: flex; margin-left: 57px; }
.menu-btn {
  width: 38px;
  height: 19px;
  line-height: 19px;
  text-align: center;
  border: 1px solid #aaa;
  box-sizing: border-box;
  margin-right: 1px;
  background: #eee;
}

.workspace { height: 693px; flex: none; display: flex; }
.left-col { width: 829px; flex: none; display: flex; flex-direction: column; }
.upper { height: 675px; flex: none; display: flex; }

.side { width: 18px; flex: none; overflow: hidden; background: #000; border-right: 1px solid #b00000; box-sizing: border-box; }
.side-arrows { height: 26px; border: 1px solid #8a0000; border-left: 0; border-right: 0; box-sizing: border-box; }
.side-tab {
  box-sizing: border-box;
  padding: 8px 0 0 3px;
  border-top: 1px solid #b00000;
  overflow: hidden;
  color: #c4c4c4;
}
.side-text {
  display: block;
  width: 14px;
  line-height: 12px;
  font-size: 12px;
  word-break: break-all;
}
.side-on { color: #40ffff; }

.center { width: 811px; flex: none; display: flex; flex-direction: column; }
.head { height: 36px; flex: none; width: 760px; border-right: 1px solid #b00000; box-sizing: content-box; }
.head-row { height: 15px; display: flex; align-items: center; padding-left: 1px; white-space: nowrap; font-size: 12px; }
.head-row:first-child { margin-top: 1px; }
.head-row span { flex: none; }
.head-icons { display: flex; }
.chart-main, .chart-macd { display: block; flex: none; }
.chart-label { font-size: 12px; font-family: "Noto Sans CJK SC", "Liberation Sans", sans-serif; }
.chart-num { font-size: 12px; letter-spacing: 1px; font-family: "Liberation Sans", sans-serif; }
.axis-text { font-size: 13px; fill: #ff3a3a; text-anchor: end; font-family: "Liberation Sans", sans-serif; }
.wm-cn { font-size: 21px; font-weight: 700; font-style: italic; fill: #e00808; font-family: "Noto Sans CJK SC", sans-serif; }
.wm-en { font-size: 20px; font-weight: 700; fill: #e00808; font-family: "Liberation Sans", sans-serif; }
.mark-s { font-size: 12px; font-weight: 700; fill: #ff2020; }
.m-week { font-size: 11px; fill: #ff1818; font-family: "Noto Sans CJK SC", sans-serif; }
.m-hash { font-size: 17px; font-weight: 700; fill: #10e8f0; font-family: "Liberation Mono", monospace; letter-spacing: -1px; }
.lh-text { font-size: 8px; font-weight: 700; fill: #402000; text-anchor: middle; }

.info {
  height: 19px;
  flex: none;
  width: 760px;
  border-right: 1px solid #b00000;
  display: flex;
  align-items: center;
  padding-left: 1px;
  box-sizing: content-box;
  white-space: nowrap;
  font-size: 12px;
}
.info span { flex: none; }

.macd-wrap { position: relative; height: 237px; flex: none; }
.advice {
  position: absolute;
  left: 1px;
  top: 0;
  width: 206px;
  height: 156px;
  box-sizing: border-box;
  background: #007a00;
  border: 1px solid #b8b8b8;
  color: #fff;
  padding-top: 2px;
  font-size: 12px;
}
.advice-row { height: 23.7px; line-height: 20px; padding-left: 1px; white-space: nowrap; }
.advice-sell { color: #00f000; }

.dates { height: 17px; flex: none; display: flex; }
.date-line {
  position: relative;
  width: 760px;
  flex: none;
  border-right: 1px solid #b00000;
  border-bottom: 1px solid #b00000;
  box-sizing: content-box;
  height: 16px;
  color: #ff3030;
  font-size: 12px;
}
.date-year { position: absolute; left: 4px; top: 0; line-height: 16px; letter-spacing: .5px; }
.date-major { position: absolute; top: 0; height: 16px; line-height: 16px; padding-left: 1px; border-left: 1px solid #b00000; }
.date-minor { position: absolute; top: 0; height: 3px; border-left: 1px solid #b00000; }
.date-cell { flex: 1; text-align: center; line-height: 16px; font-size: 12px; border-bottom: 1px solid #b00000; }

.toolbar { height: 17px; flex: none; display: flex; background: #1c1c1c; }
.toolbar-b { height: 18px; width: 829px; border-top: 1px solid #b00000; border-bottom: 1px solid #b00000; box-sizing: border-box; background: #1a1a1a; }
.tools { width: 761px; flex: none; display: flex; border-right: 1px solid #b00000; box-sizing: border-box; }
.toolbar-b .tools { width: 779px; }
.tool {
  flex: none;
  box-sizing: border-box;
  text-align: center;
  border-right: 1px solid #b00000;
  line-height: 16px;
  font-size: 12px;
  color: #c4c4c4;
  white-space: nowrap;
  overflow: hidden;
}
.tool.sel { background: #585858; color: #fff; }
.tool.cyan { color: #20ffff; background: #000; }
.tool.olive { color: #c8c800; }
.tool.mono { font-family: "Liberation Mono", monospace; font-size: 10.5px; }
.zoom-btns { flex: 1; display: flex; background: #000; }
.zoom-btn { flex: 1; text-align: center; line-height: 16px; border-right: 1px solid #b00000; }
.zoom-btn:last-child { border-right: 0; }
.f10 { flex: 1; text-align: center; line-height: 16px; font-size: 12px; }

.panel {
  width: 195px;
  flex: none;
  box-sizing: border-box;
  border-left: 1px solid #b00000;
  border-right: 1px solid #b00000;
  display: flex;
  flex-direction: column;
  font-weight: 700;
}
.cn16 { font-size: 15.5px; font-weight: 400; color: #c4c4c4; white-space: nowrap; }
.p-title { height: 31px; flex: none; display: flex; justify-content: space-between; padding: 8px 6px 0 40px; box-sizing: border-box; }
.p-name { color: #c01010; font-size: 18px; }
.p-code { color: #fff; font-size: 13px; }
.p-quote {
  height: 24px; flex: none; box-sizing: border-box;
  border-bottom: 1px solid #b00000;
  display: flex; align-items: center; padding-left: 2px; color: #00f000;
}
.q-price { font-size: 16.5px; width: 35px; }
.q-yuan { font-size: 16px; font-weight: 400; color: #c4c4c4; width: 34px; }
.q-arrow { font-size: 15px; width: 13px; line-height: 15px; }
.q-chg { font-size: 15.5px; width: 57px; }
.q-pct { font-size: 16px; white-space: nowrap; }
.p-vol {
  height: 20px; flex: none; box-sizing: border-box;
  border-bottom: 1px solid #b00000;
  display: flex; align-items: center; padding-left: 2px; font-size: 14px;
}
.v-now { color: #00f000; width: 26px; margin-left: 36px; }
.v-total { width: 40px; margin-left: 4px; }
.v-sum { flex: 1; text-align: right; padding-right: 3px; color: #c4c4c4; }
.p-book { flex: none; box-sizing: border-box; }
.p-sell { height: 93px; padding-top: 2px; }
.p-buy { height: 92px; border-bottom: 1px solid #b00000; padding-top: 1px; }
.book-row { height: 18px; display: flex; align-items: center; position: relative; font-size: 14px; }
.book-side { width: 38px; padding-left: 3px; box-sizing: border-box; font-size: 15.5px; font-weight: 400; color: #c4c4c4; white-space: nowrap; }
.book-n { width: 50px; font-size: 15.5px; font-weight: 400; color: #c4c4c4; }
.book-p { width: 72px; color: #00e800; padding-left: 1px; }
.book-big { font-size: 18px; margin-left: -3px; width: 75px; }
.book-v { width: 29px; text-align: right; color: #c8c800; }
.p-divider { height: 3px; flex: none; display: flex; }
.div-red { width: 128px; background: #ff3030; }
.div-green { flex: 1; background: #00e000; }
.p-stats { height: 78px; flex: none; box-sizing: border-box; padding-top: 1px; border-bottom: 1px solid #b00000; }
.p-stats2 { height: 58px; padding-top: 1px; }
.stat-row { height: 19px; display: flex; align-items: center; font-size: 14px; padding-left: 2px; }
.stat-a { width: 46px; }
.stat-tight { font-size: 13px; letter-spacing: -.5px; }
.stat-b { width: 44px; text-align: right; }
.stat-c { width: 38px; margin-left: 7px; }
.stat-d { width: 59px; text-align: right; }
.p-flow { height: 76px; flex: none; box-sizing: border-box; border-bottom: 1px solid #b00000; padding-top: 1px; }
.flow-row { height: 18.5px; display: flex; align-items: center; position: relative; padding-left: 2px; font-size: 13.5px; color: #00f000; }
.flow-a { flex: 1; }
.flow-v { font-weight: 700; white-space: nowrap; width: 66px; text-align: right; margin-right: 34px; }
.flow-far { margin-right: 41px; }
.flow-p { position: absolute; right: 1px; }
.p-ticks { flex: none; height: 199px; padding-bottom: 1px; border-bottom: 1px solid #b00000; box-sizing: border-box; }
.tick-row { height: 18px; display: flex; align-items: center; font-size: 14px; }
.tick-time { width: 82px; padding-left: 3px; box-sizing: border-box; color: #c4c4c4; }
.tick-price { width: 36px; color: #00e800; }
.tick-vol { width: 53px; text-align: right; color: #c8c800; }
.tick-side { width: 20px; text-align: right; padding-right: 1px; box-sizing: border-box; }
.p-tabs { flex: 1; display: flex; font-weight: 400; }
.p-tab { width: 24px; text-align: center; line-height: 16px; font-size: 14px; border-right: 1px solid #b00000; box-sizing: border-box; color: #c4c4c4; }
.p-tab-on { color: #20ffff; background: #18282c; }

.status {
  height: 21px;
  flex: none;
  display: flex;
  align-items: center;
  background: #ece9d8;
  border-top: 1px solid #fff;
  box-sizing: border-box;
  color: #111;
  font-size: 12px;
}
.st-quotes { width: 687px; flex: none; display: flex; align-items: center; padding-left: 4px; box-sizing: border-box; white-space: nowrap; border-right: 1px solid #a8a898; height: 100%; }
.st-quotes span { flex: none; }
.st-brand { color: #e83000; font-size: 13px; }
.st-ink { color: #111; }
.st-green { color: #008000; }
.st-bold { font-weight: 700; }
.st-meter { width: 108px; flex: none; padding-left: 3px; box-sizing: border-box; border-right: 1px solid #a8a898; height: 100%; display: flex; align-items: center; }
.st-server { width: 122px; flex: none; padding-left: 4px; box-sizing: border-box; font-size: 12.5px; white-space: nowrap; }
.st-icons { display: flex; align-items: center; gap: 5px; }

.taskbar {
  height: 30px;
  flex: none;
  display: flex;
  align-items: center;
  background: linear-gradient(#3f8cf3 0, #2468dc 12%, #245edb 55%, #1d4eb8 92%, #1941a5 100%);
}
.start {
  width: 97px;
  height: 30px;
  flex: none;
  display: flex;
  align-items: center;
  gap: 9px;
  padding-left: 11px;
  box-sizing: border-box;
  background: linear-gradient(#5aaa58, #3c8e3a 20%, #388a36 75%, #2e7a2c);
  border-radius: 0 12px 12px 0;
}
.start-text { font-size: 18px; font-style: italic; color: #fff; }
.quick { display: flex; align-items: center; gap: 6px; margin-left: 11px; width: 224px; flex: none; }
.task-btn {
  width: 160px;
  height: 26px;
  flex: none;
  margin-left: 16px;
  display: flex;
  align-items: center;
  gap: 3px;
  padding-left: 11px;
  box-sizing: border-box;
  background: #1e52b7;
  border: 1px solid #153f96;
  border-radius: 3px;
  color: #fff;
  font-size: 12.5px;
}
.task-text { white-space: nowrap; letter-spacing: .3px; }
.tray-wrap { margin-left: auto; display: flex; align-items: center; height: 30px; }
.tray-kb { margin-right: 5px; }
.tray-chev { position: relative; z-index: 1; margin-right: -10px; }
.tray {
  width: 113px;
  height: 30px;
  display: flex;
  align-items: center;
  padding-left: 11px;
  gap: 2px;
  box-sizing: border-box;
  background: linear-gradient(#20a8f0, #1290e8 30%, #0f86e0 85%, #0c6cc4);
}
.clock { margin-left: 10px; color: #fff; font-size: 12px; letter-spacing: 1px; }

.top-circles { position: absolute; left: 955px; top: 1px; display: flex; gap: 5px; }
.top-circles i { width: 16px; height: 16px; border-radius: 50%; border: 1px solid #999; background: #eee; }
.banner {
  position: absolute;
  left: 799px;
  top: 8px;
  width: 225px;
  height: 47px;
  background: rgba(255, 255, 255, .93);
}
.banner-top { height: 24px; display: flex; align-items: center; padding-left: 5px; }
.banner-cn { color: #1414f0; font-size: 19px; font-weight: 700; width: 66px; white-space: nowrap; }
.banner-sub {
  color: #333;
  background: #e4e4e4;
  border: 1px solid #999;
  font-size: 15px;
  font-weight: 700;
  letter-spacing: 3px;
  height: 17px;
  line-height: 17px;
  white-space: nowrap;
  width: 144px;
}
.banner-url { color: #e02800; font-size: 23px; font-weight: 700; line-height: 22px; padding-left: 3px; white-space: nowrap; }
</style>
